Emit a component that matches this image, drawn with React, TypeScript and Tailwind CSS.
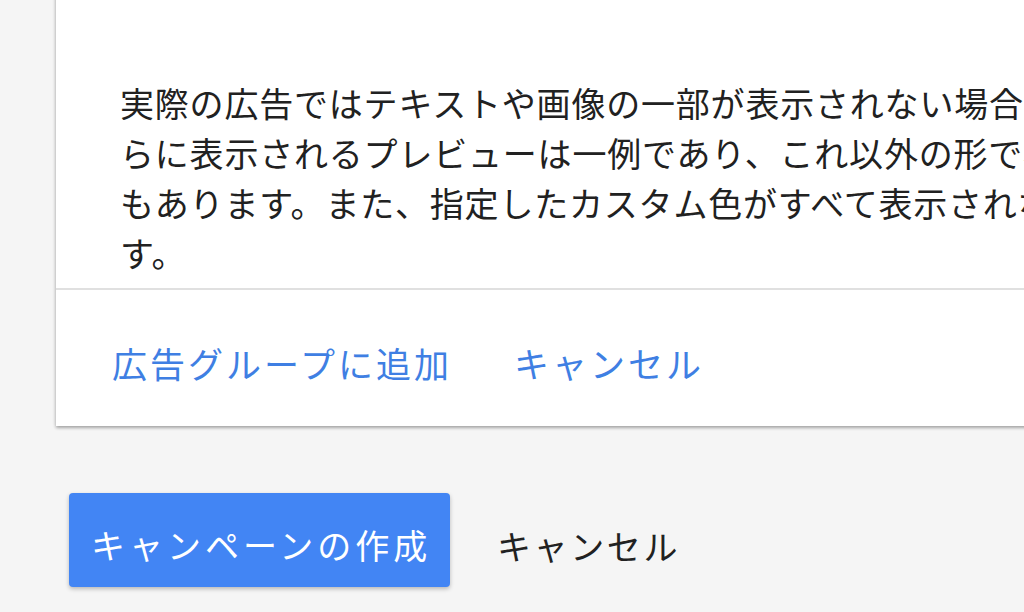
import React from 'react'

const LINES = [
  '実際の広告ではテキストや画像の一部が表示されない場合があります。さ',
  'らに表示されるプレビューは一例であり、これ以外の形で表示されること',
  'もあります。また、指定したカスタム色がすべて表示されないこともありま',
  'す。',
]

const font = { fontFamily: '"Noto Sans CJK JP", "Noto Sans", sans-serif' }

export default function App() {
  return (
    <div className="w-[1024px] h-[612px] overflow-hidden bg-[#f5f5f5]" style={font}>
      {/* プレビューカード */}
      <div className="ml-[56px] -mt-[20px] w-[1100px] bg-white shadow-[0_2px_3px_rgba(0,0,0,0.3),-1px_0_4px_rgba(0,0,0,0.08)]">
        <div className="pt-[98px] pb-[10px] pl-[64px] text-[34px] leading-[50px] tracking-[0.8px] text-[#212121] whitespace-nowrap">
          {LINES.map((line, i) => (
            <div key={i}>{line}</div>
          ))}
        </div>
        <div className="h-[2px] bg-[#e0e0e0]" />
        <div className="flex items-center gap-[62px] pl-[56px] pt-[48px] pb-[38px] text-[35px] leading-[50px] tracking-[3px] text-[#3f7fe3]">
          <button>広告グループに追加</button>
          <button>キャンセル</button>
        </div>
      </div>

      {/* フッター操作 */}
      <div className="flex items-center gap-[47px] ml-[69px] mt-[67px]">
        <button className="flex items-center h-[94px] w-[381px] rounded-[4px] bg-[#4285f4] pl-[22px] pt-[8px] text-[34px] tracking-[4px] text-white shadow-[0_2px_4px_rgba(0,0,0,0.25)]">
          キャンペーンの作成
        </button>
        <button className="pt-[10px] text-[34px] tracking-[2.6px] text-[#212121]">キャンセル</button>
      </div>
    </div>
  )
}
